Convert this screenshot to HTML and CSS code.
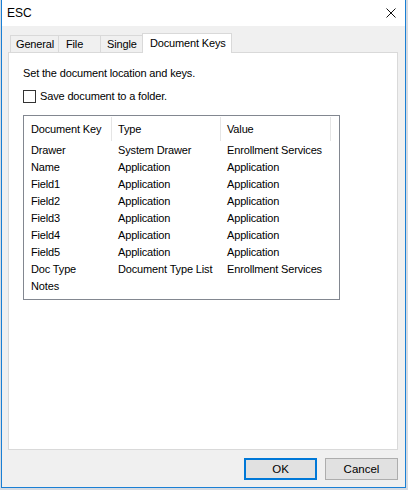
FILE: index.html
```html
<!DOCTYPE html>
<html>
<head>
<meta charset="utf-8">
<link rel="stylesheet" href="styles.css">
</head>
<body>
<div class="window">
  <div class="titlebar">
    <span class="title">ESC</span>
    <span class="close">
      <svg width="10" height="10" viewBox="0 0 10 10"><path d="M0.5 0.5 L9.5 9.5 M9.5 0.5 L0.5 9.5" stroke="#111" stroke-width="1" fill="none"/></svg>
    </span>
  </div>
  <div class="content">
    <div class="tabs">
      <div class="tab t-general">General</div>
      <div class="tab t-file">File</div>
      <div class="tab t-single">Single</div>
      <div class="tab t-keys selected">Document Keys</div>
    </div>
    <div class="panel">
      <div class="intro">Set the document location and keys.</div>
      <label class="check-row"><span class="checkbox"></span><span>Save document to a folder.</span></label>
      <div class="list">
        <div class="header">
          <div class="hcell c1">Document Key</div>
          <div class="hcell c2">Type</div>
          <div class="hcell c3">Value</div>
        </div>
        <div class="row"><div class="c1">Drawer</div><div class="c2">System Drawer</div><div class="c3">Enrollment Services</div></div>
        <div class="row"><div class="c1">Name</div><div class="c2">Application</div><div class="c3">Application</div></div>
        <div class="row"><div class="c1">Field1</div><div class="c2">Application</div><div class="c3">Application</div></div>
        <div class="row"><div class="c1">Field2</div><div class="c2">Application</div><div class="c3">Application</div></div>
        <div class="row"><div class="c1">Field3</div><div class="c2">Application</div><div class="c3">Application</div></div>
        <div class="row"><div class="c1">Field4</div><div class="c2">Application</div><div class="c3">Application</div></div>
        <div class="row"><div class="c1">Field5</div><div class="c2">Application</div><div class="c3">Application</div></div>
        <div class="row"><div class="c1">Doc Type</div><div class="c2">Document Type List</div><div class="c3">Enrollment Services</div></div>
        <div class="row"><div class="c1">Notes</div><div class="c2"></div><div class="c3"></div></div>
      </div>
    </div>
    <div class="footer">
      <div class="btn default">OK</div>
      <div class="btn">Cancel</div>
    </div>
  </div>
</div>
</body>
</html>
```
FILE: styles.css
```css
html, body {
  margin: 0;
  padding: 0;
}
body {
  background: #d6dbe2;
  font-family: "Liberation Sans", Arial, sans-serif;
  font-size: 11px;
  letter-spacing: -0.15px;
  color: #000;
  width: 408px;
  height: 490px;
  overflow: hidden;
}
.window {
  margin-left: 1px;
  width: 405px;
  height: 488px;
  box-sizing: border-box;
  border: 1px solid #1a7fd4;
  border-top: none;
  background: #f0f0f0;
  display: flex;
  flex-direction: column;
}
.titlebar {
  height: 26px;
  flex: none;
  background: #fff;
  display: flex;
  align-items: center;
  justify-content: space-between;
  padding-left: 5px;
}
.title {
  font-size: 12px;
  letter-spacing: 0;
}
.close {
  width: 28px;
  height: 26px;
  display: flex;
  align-items: center;
  justify-content: center;
}
.close svg {
  display: block;
}
.content {
  flex: 1;
  display: flex;
  flex-direction: column;
  padding: 7px 7px 7px 6px;
}
.tabs {
  height: 20px;
  flex: none;
  display: flex;
  align-items: flex-end;
  padding-left: 2px;
  margin-bottom: -1px;
  position: relative;
  z-index: 1;
}
.tab {
  box-sizing: border-box;
  height: 17px;
  margin-bottom: 1px;
  border: 1px solid #d9d9d9;
  border-bottom: none;
  margin-right: -1px;
  background: #f0f0f0;
  padding-left: 5px;
  line-height: 17px;
}
.t-general { width: 49px; }
.t-file { width: 43px; padding-left: 7px; }
.t-single { width: 43px; padding-left: 6px; }
.tab.selected {
  width: 90px;
  height: 20px;
  margin-bottom: 0;
  background: #fff;
  padding-left: 7px;
  line-height: 19px;
}
.panel {
  flex: 1;
  background: #fff;
  border: 1px solid #d9d9d9;
  padding: 14px 0 0 14px;
  display: flex;
  flex-direction: column;
  align-items: flex-start;
}
.intro {
  line-height: 13px;
}
.check-row {
  margin-top: 10px;
  display: flex;
  align-items: center;
  gap: 4px;
  line-height: 13px;
}
.checkbox {
  width: 13px;
  height: 13px;
  box-sizing: border-box;
  border: 1px solid #333;
  background: #fff;
}
.list {
  margin-top: 12px;
  width: 317px;
  height: 185px;
  box-sizing: border-box;
  border: 1px solid #828790;
  padding-top: 1px;
}
.header, .row {
  display: grid;
  grid-template-columns: 88px 109px 110px;
}
.header {
  height: 25px;
}
.hcell {
  height: 24px;
  line-height: 24px;
  border-right: 1px solid #e5e5e5;
  padding-left: 6px;
}
.row {
  height: 17px;
  line-height: 17px;
}
.row > div {
  padding-left: 6px;
  white-space: nowrap;
}
.header .c1, .row .c1 {
  padding-left: 7px;
}
.footer {
  flex: none;
  margin-top: 8px;
  display: flex;
  justify-content: flex-end;
  gap: 8px;
}
.btn {
  width: 73px;
  height: 22px;
  box-sizing: border-box;
  border: 1px solid #adadad;
  background: #e1e1e1;
  display: flex;
  align-items: center;
  justify-content: center;
  font-size: 11.5px;
  letter-spacing: 0;
}
.btn.default {
  border: 2px solid #0078d7;
}
```
